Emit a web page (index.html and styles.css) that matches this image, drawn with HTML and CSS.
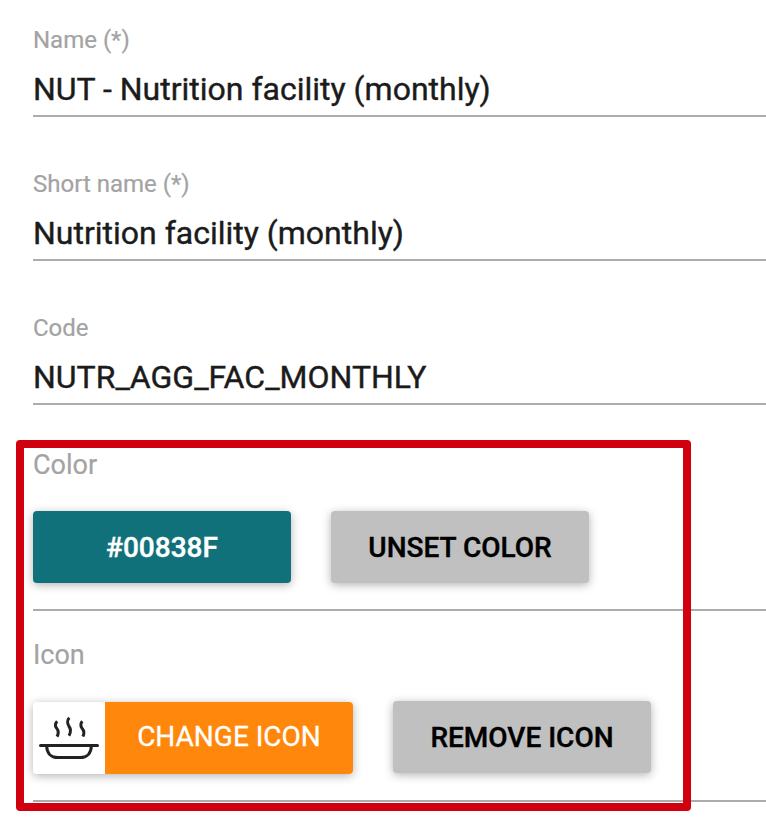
FILE: index.html
```html
<!DOCTYPE html>
<html lang="en">
<head>
<meta charset="utf-8">
<title>Data set</title>
<link rel="stylesheet" href="styles.css">
</head>
<body>
<form class="form">
  <div class="field">
    <div class="label">Name (*)</div>
    <div class="value">NUT - Nutrition facility (monthly)</div>
  </div>
  <div class="field">
    <div class="label">Short name (*)</div>
    <div class="value">Nutrition facility (monthly)</div>
  </div>
  <div class="field">
    <div class="label">Code</div>
    <div class="value">NUTR_AGG_FAC_MONTHLY</div>
  </div>
  <div class="picker color">
    <div class="title">Color</div>
    <div class="row">
      <div class="button teal">#00838F</div>
      <div class="button gray">UNSET COLOR</div>
    </div>
  </div>
  <div class="picker icon">
    <div class="title">Icon</div>
    <div class="row">
      <div class="iconbutton">
        <svg class="bowl" viewBox="0 0 72 72" fill="none" stroke="#222" stroke-width="3" stroke-linecap="round" stroke-linejoin="round">
          <path d="M7.5 43.5H64.5M13.7 44C13.7 51 18 55.6 25 55.6H47C54 55.6 58.3 51 58.3 44"/>
          <path stroke-linecap="butt" d="M24.2 19.3C21.8 21.5 22 24 23.6 26.2C25.4 28.5 26.2 31 24 34.6M36.3 15.8C34.2 18 34.2 21.5 35.8 24C38 27 38.2 30 36 33.7M49.3 19.3C47.3 21.5 47.5 24 49 26.2C51.2 28.7 51.8 31 49.8 34.6"/>
        </svg>
        <div class="change">CHANGE ICON</div>
      </div>
      <div class="button gray">REMOVE ICON</div>
    </div>
  </div>
</form>
<div class="highlight"></div>
</body>
</html>
```
FILE: styles.css
```css
* { box-sizing: border-box; }
body { margin: 0; background: #fff; font-family: Roboto, sans-serif; overflow: hidden; }
.form { padding-left: 33px; height: 824px; }
.field { height: 144px; padding-top: 26px; }
.label { font-size: 24px; line-height: 28px; color: #a3a3a3; -webkit-text-stroke: .2px #a3a3a3; }
.value { height: 63px; border-bottom: 2px solid #acacac; padding-top: 16px; font-size: 32px; line-height: 38px; color: #1b1b1b; white-space: nowrap; -webkit-text-stroke: .4px #1b1b1b; }
.title { font-size: 27px; line-height: 32px; color: #a3a3a3; -webkit-text-stroke: .2px #a3a3a3; }
.picker { border-bottom: 2px solid #acacac; }
.color { height: 179px; padding-top: 17px; }
.icon { height: 191px; padding-top: 28px; }
.row { display: flex; gap: 40px; margin-top: 30px; }
.button { width: 258px; height: 72px; border-radius: 4px; font-size: 28px; line-height: 73px; font-weight: 500; text-align: center; box-shadow: 0 2px 10px rgba(0,0,0,.3); -webkit-text-stroke: .4px currentColor; }
.teal { background: #11717b; color: #fff; }
.gray { background: #c0c0c0; color: #000; }
.iconbutton { display: flex; width: 320px; height: 72px; margin-top: 1px; border-radius: 4px; overflow: hidden; box-shadow: 0 2px 10px rgba(0,0,0,.3); }
.bowl { width: 72px; height: 72px; background: #fff; }
.change { flex: 1; background: #ff870b; color: #fff; font-size: 28px; line-height: 70px; text-align: center; -webkit-text-stroke: .3px #fff; }
.highlight { position: absolute; left: 16px; top: 440px; width: 675px; height: 371px; border: 8px solid #d0000f; border-radius: 4px; }
```
